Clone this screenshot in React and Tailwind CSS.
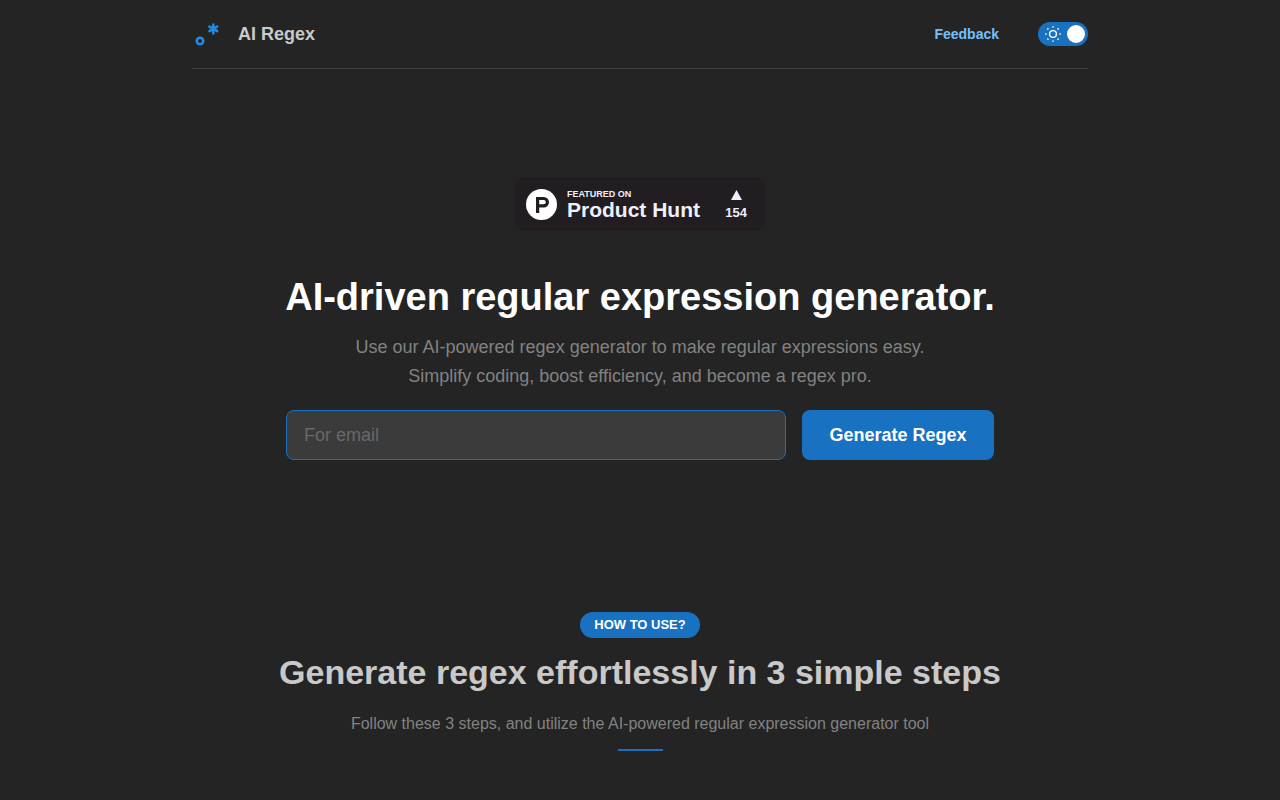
import React from 'react';

function Logo() {
  return (
    <svg width="30" height="30" viewBox="0 0 30 30" fill="none" stroke="#228be6" aria-hidden="true">
      <circle cx="8" cy="22" r="3.2" strokeWidth="2.6" />
      <path
        d="M21.3 5.4v9M17.4 7.6l7.8 4.6M25.2 7.6l-7.8 4.6"
        strokeWidth="2.5"
        strokeLinecap="round"
      />
    </svg>
  );
}

function SunIcon() {
  return (
    <svg width="16" height="16" viewBox="0 0 16 16" fill="none" stroke="#fff" aria-hidden="true">
      <circle cx="8" cy="8" r="3.4" strokeWidth="1.4" />
      <path
        d="M8 .2v1.4M8 14.4v1.4M.2 8h1.4M14.4 8h1.4M2.4 2.4l1 1M12.6 12.6l1 1M2.4 13.6l1-1M12.6 3.4l1-1"
        strokeWidth="1.6"
      />
    </svg>
  );
}

function ThemeSwitch({ checked, onChange }) {
  return (
    <label className="relative flex h-6 w-[50px] cursor-pointer items-center justify-between rounded-full bg-[#1971c2] pr-[3px] pl-[7px]">
      <input
        type="checkbox"
        role="switch"
        aria-label="Toggle color scheme"
        className="sr-only"
        checked={checked}
        onChange={(e) => onChange(e.target.checked)}
      />
      <SunIcon />
      <span className="size-[18px] rounded-full bg-white" />
    </label>
  );
}

function Header() {
  const [dark, setDark] = React.useState(true);

  return (
    <header className="flex items-center justify-between border-b border-[#424242] pt-[19px] pb-[19px]">
      <a href="#" className="flex items-center gap-4">
        <Logo />
        <span className="text-lg font-bold text-[#c9c9c9]">AI Regex</span>
      </a>
      <nav className="flex items-center gap-[39px]">
        <a href="#feedback" className="text-sm font-bold text-[#74c0fc]">Feedback</a>
        <ThemeSwitch checked={dark} onChange={setDark} />
      </nav>
    </header>
  );
}

function ProductHuntBadge() {
  return (
    <a
      href="#product-hunt"
      className="flex h-[54px] w-[250px] items-center justify-between rounded-[10px] bg-[#221d20] pr-[18px] pl-[11px] font-bold text-[#eef0ff]"
    >
      <span className="flex items-center gap-[10px]">
        <svg width="31" height="31" viewBox="0 0 31 31" aria-hidden="true">
          <circle cx="15.5" cy="15.5" r="15.5" fill="#fff" />
          <path
            fill="#221d20"
            fillRule="evenodd"
            d="M10 8h7.8a5.2 5.2 0 0 1 0 10.4h-4.6V24H10zM13.2 11.1v4.2h4.5a2.1 2.1 0 0 0 0-4.2z"
          />
        </svg>
        <span className="flex flex-col pt-[2px]">
          <span className="text-[9px] leading-[10px]">FEATURED ON</span>
          <span className="text-[21px] leading-[22px]">Product Hunt</span>
        </span>
      </span>
      <span className="flex flex-col items-center gap-[5px] pt-[2px]">
        <svg width="11" height="10" viewBox="0 0 11 10" fill="#eef0ff" aria-hidden="true">
          <path d="M5.5 0L11 10H0z" />
        </svg>
        <span className="text-[13px] leading-4">154</span>
      </span>
    </a>
  );
}

function Hero() {
  const [value, setValue] = React.useState('');

  return (
    <section className="flex flex-col items-center pt-[108px] pb-[152px]">
      <ProductHuntBadge />
      <h1 className="mt-10 text-center text-[38px] leading-[52px] font-bold text-white">
        AI-driven regular expression generator.
      </h1>
      <p className="mt-[10px] text-center text-lg leading-[29px] text-[#828282]">
        Use our AI-powered regex generator to make regular expressions easy.
        <br />
        Simplify coding, boost efficiency, and become a regex pro.
      </p>
      <form
        className="mt-[19px] flex w-full max-w-[708px] gap-4"
        onSubmit={(e) => e.preventDefault()}
      >
        <input
          type="text"
          aria-label="Describe your regex"
          placeholder="For email"
          value={value}
          onChange={(e) => setValue(e.target.value)}
          className="h-[50px] min-w-0 flex-1 rounded-lg border border-[#1971c2] bg-[#3b3b3b] px-[17px] text-lg text-[#c9c9c9] outline-none placeholder:text-[#696969]"
        />
        <button
          type="submit"
          className="h-[50px] w-48 rounded-lg bg-[#1971c2] text-lg font-bold text-white"
        >
          Generate Regex
        </button>
      </form>
    </section>
  );
}

function HowToUse() {
  return (
    <section className="flex flex-col items-center pb-12 text-center">
      <span className="flex h-[26px] items-center rounded-full bg-[#1971c2] px-[14px] text-[13px] font-bold text-white">
        HOW TO USE?
      </span>
      <h2 className="mt-3 text-[34px] leading-[44px] font-bold text-[#c9c9c9]">
        Generate regex effortlessly in 3 simple steps
      </h2>
      <p className="mt-[17px] text-base leading-[26px] text-[#828282]">
        Follow these 3 steps, and utilize the AI-powered regular expression generator tool
      </p>
      <span className="mt-3 h-[2px] w-[45px] bg-[#1971c2]" />
    </section>
  );
}

export default function App() {
  return (
    <div className="min-h-screen bg-[#242424] font-['Liberation_Sans',Arial,sans-serif]">
      <div className="mx-auto max-w-4xl">
        <Header />
        <main>
          <Hero />
          <HowToUse />
        </main>
      </div>
    </div>
  );
}
